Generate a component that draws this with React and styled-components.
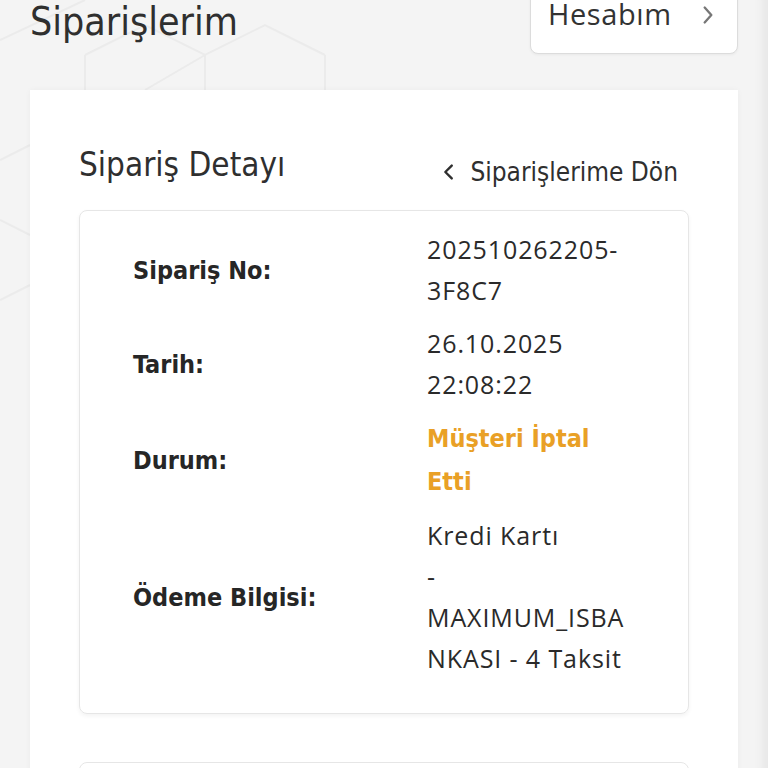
import React from 'react';
import styled, { createGlobalStyle } from 'styled-components';

const GlobalStyle = createGlobalStyle`
  html, body {
    margin: 0;
    padding: 0;
    background: #f4f4f4;
    overflow: hidden;
  }
`;

const condensed = `'Liberation Sans Narrow', 'DejaVu Sans Condensed', sans-serif`;
const round = `'Open Sans', 'Noto Sans', sans-serif`;

const Page = styled.div`
  position: relative;
  width: 768px;
  height: 768px;
  overflow: hidden;
  background: #f4f4f4;
  box-shadow: inset -16px 0 10px -10px rgba(0, 0, 0, 0.05);
`;

const Backdrop = styled.svg`
  position: absolute;
  inset: 0;
  pointer-events: none;
`;

const Content = styled.div`
  position: relative;
  padding: 0 30px;
`;

const TopBar = styled.div`
  display: flex;
  justify-content: space-between;
  align-items: flex-start;
  margin-top: -18px;
`;

const PageTitle = styled.h1`
  margin: 0;
  padding-top: 16px;
  font-family: ${condensed};
  font-weight: 400;
  font-size: 39px;
  line-height: 48px;
  color: #2f2f2f;
`;

const AccountButton = styled.button`
  display: flex;
  align-items: center;
  gap: 26px;
  width: 208px;
  height: 72px;
  padding: 0 18px 8px 17px;
  background: #fff;
  border: 1px solid #dcdcdc;
  border-radius: 8px;
  font-family: ${round};
  font-size: 29px;
  letter-spacing: 0.6px;
  line-height: 36px;
  color: #333;
  box-shadow: 0 1px 3px rgba(0, 0, 0, 0.05);

  svg {
    margin-top: 2px;
  }
`;

const Card = styled.div`
  margin-top: 36px;
  background: #fff;
  padding: 50px 49px 40px;
  box-shadow: 0 0 6px rgba(0, 0, 0, 0.04);
`;

const CardHead = styled.div`
  display: flex;
  justify-content: space-between;
  align-items: center;
  margin-bottom: 20px;
`;

const SectionTitle = styled.h2`
  margin: 0;
  font-family: ${condensed};
  font-weight: 400;
  font-size: 33px;
  line-height: 50px;
  color: #2f2f2f;
`;

const BackLink = styled.a`
  display: flex;
  align-items: center;
  gap: 10px;
  margin-top: 14px;
  margin-right: 11px;
  font-family: ${condensed};
  font-size: 26px;
  color: #2f2f2f;
  text-decoration: none;
`;

const DetailBox = styled.div`
  border: 1px solid #e6e6e6;
  border-radius: 8px;
  box-shadow: 0 2px 4px rgba(0, 0, 0, 0.05);
  padding: 12px 20px 28px 53px;
  margin-bottom: 48px;
`;

const Row = styled.div`
  display: grid;
  grid-template-columns: 294px 1fr;
  align-items: center;
  padding: 6px 0;
`;

const Label = styled.div`
  font-family: ${condensed};
  font-weight: 700;
  font-size: 25px;
  color: #262626;
`;

const Value = styled.div`
  font-family: ${(p) => (p.$accent ? condensed : round)};
  font-size: 25px;
  letter-spacing: ${(p) => (p.$accent ? '0' : '0.9px')};
  line-height: ${(p) => (p.$accent ? '43px' : '41px')};
  color: ${(p) => (p.$accent ? '#e9a026' : '#2a2a2a')};
  font-weight: ${(p) => (p.$accent ? 700 : 400)};
`;

const Line = styled.span`
  display: block;
`;

const NextBox = styled.div`
  height: 40px;
  border: 1px solid #e6e6e6;
  border-radius: 8px;
`;

const Chevron = ({ dir = 'right', size = 22, color = '#555', width = 2.6 }) => (
  <svg width={size} height={size} viewBox="0 0 24 24" fill="none" stroke={color} strokeWidth={width} strokeLinecap="round" strokeLinejoin="round">
    {dir === 'right' ? <path d="M8 3l8 9-8 9" /> : <path d="M15 5l-7 7 7 7" />}
  </svg>
);

const rows = [
  { label: 'Sipariş No:', lines: ['202510262205-', '3F8C7'] },
  { label: 'Tarih:', lines: ['26.10.2025', '22:08:22'] },
  { label: 'Durum:', lines: ['Müşteri İptal', 'Etti'], accent: true },
  { label: 'Ödeme Bilgisi:', lines: ['Kredi Kartı', '-', 'MAXIMUM_ISBA', 'NKASI - 4 Taksit'] },
];

export default function App() {
  return (
    <Page>
      <GlobalStyle />
      <Backdrop width="768" height="768" viewBox="0 0 768 768">
        <g fill="none" stroke="#ebebeb" strokeWidth="2">
          <path d="M85 55 L85 95 M205 55 L205 95 M325 55 L325 95" />
          <path d="M0 40 L85 0 M85 55 L145 25 L205 55 L265 25 L325 55 M205 55 L145 90" />
          <path d="M0 160 L30 145 M0 300 L30 285 M0 220 L30 235" />
        </g>
      </Backdrop>
      <Content>
        <TopBar>
          <PageTitle>Siparişlerim</PageTitle>
          <AccountButton>
            Hesabım
            <Chevron size={20} color="#777" width={2.8} />
          </AccountButton>
        </TopBar>
        <Card>
          <CardHead>
            <SectionTitle>Sipariş Detayı</SectionTitle>
            <BackLink href="#">
              <Chevron dir="left" size={22} color="#2f2f2f" width={2.6} />
              Siparişlerime Dön
            </BackLink>
          </CardHead>
          <DetailBox>
            {rows.map((r) => (
              <Row key={r.label}>
                <Label>{r.label}</Label>
                <Value $accent={r.accent}>
                  {r.lines.map((l) => (
                    <Line key={l}>{l}</Line>
                  ))}
                </Value>
              </Row>
            ))}
          </DetailBox>
          <NextBox />
        </Card>
      </Content>
    </Page>
  );
}
